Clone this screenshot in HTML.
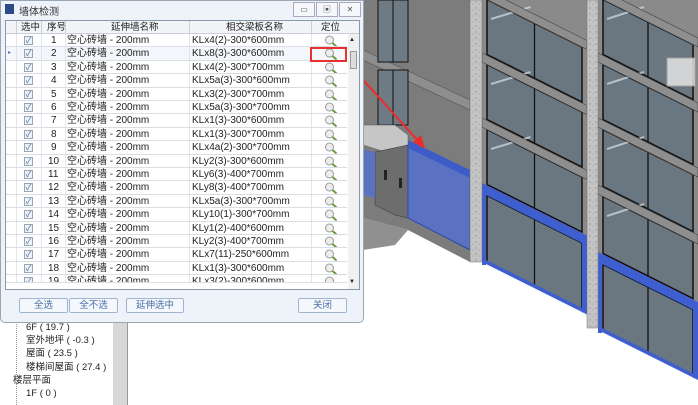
<!DOCTYPE html>
<html><head><meta charset="utf-8"><style>
*{margin:0;padding:0;box-sizing:border-box}
body{width:698px;height:405px;overflow:hidden;background:#fff;position:relative;font-family:"Liberation Sans","Noto Sans CJK SC",sans-serif;font-size:10px;color:#222}
.abs{position:absolute}
#dlg{left:0;top:0;width:364px;height:323px;background:#eef3f9;border:1px solid #9aa6b4;border-radius:0 0 5px 5px}
.row{position:absolute;left:5px;width:341px;height:13.4px;border-bottom:1px solid #d9dee6;background:#fff}
.row.alt{background:#f3f6fa}
.row span{position:absolute;top:0;line-height:13px;white-space:nowrap}
.cb{position:absolute;left:18px;top:2px;width:9px;height:9px;border:1px solid #9aa5b2;background:#eef1f5;font-size:8px;line-height:7px;text-align:center;color:#3b6fb5}
.mg{position:absolute;left:318px;top:1px}
.btn{position:absolute;top:297px;height:15px;border:1px solid #9fb5d2;background:#f4f8fc;border-radius:2px;text-align:center;line-height:13px;color:#4a6fa6;font-size:9.5px}
.tree{position:absolute;font-size:9.5px;line-height:12px;white-space:nowrap}
.wb{position:absolute;top:1px;width:22px;height:15px;border:1px solid #aab;background:#f5f7fa;font-size:8px;color:#555;text-align:center;line-height:13px}
</style></head><body>

<svg id="scene" class="abs" style="left:0;top:0" width="698" height="405"></svg>

<!-- tree panel -->
<div class="abs" style="left:0;top:320px;width:128px;height:85px;background:#fff;border-right:1px solid #999"></div>
<div class="abs" style="left:113px;top:320px;width:14px;height:85px;background:#d8d8d8"></div>
<div class="tree" style="left:26px;top:322px">6F ( 19.7 )</div>
<div class="tree" style="left:26px;top:335px">室外地坪 ( -0.3 )</div>
<div class="tree" style="left:26px;top:348px">屋面 ( 23.5 )</div>
<div class="tree" style="left:26px;top:362px">楼梯间屋面 ( 27.4 )</div>
<div class="tree" style="left:13px;top:375px">楼层平面</div>
<div class="tree" style="left:26px;top:388px">1F ( 0 )</div>
<div class="abs" style="left:16px;top:320px;width:0;height:85px;border-left:1px dotted #999"></div>

<!-- dialog -->
<div id="dlg" class="abs">
 <div class="abs" style="left:4px;top:3px;width:9px;height:10px;background:#2a4a8a"></div>
 <div class="abs" style="left:18px;top:2px;font-size:10px;color:#333">墙体检测</div>
 <div class="wb" style="left:292px">▭</div><div class="wb" style="left:315px">▣</div><div class="wb" style="left:338px">✕</div>
 <div class="abs" style="left:4px;top:19px;width:355px;height:270px;border:1px solid #8a98aa;background:#fff;overflow:hidden">
  <div class="abs" style="left:0;top:0;width:353px;height:13px;background:#f2f4f7;border-bottom:1px solid #c8ced6;font-size:9.5px;line-height:13px">
   <span class="abs" style="left:15px;">选中</span><span class="abs" style="left:41px">序号</span><span class="abs" style="left:105px">延伸墙名称</span><span class="abs" style="left:220px">相交梁板名称</span><span class="abs" style="left:315px">定位</span>
   <div class="abs" style="left:10px;top:0;height:13px;border-left:1px solid #ccd"></div><div class="abs" style="left:35px;top:0;height:13px;border-left:1px solid #ccd"></div><div class="abs" style="left:59px;top:0;height:13px;border-left:1px solid #ccd"></div><div class="abs" style="left:183px;top:0;height:13px;border-left:1px solid #ccd"></div><div class="abs" style="left:305px;top:0;height:13px;border-left:1px solid #ccd"></div>
  </div>
  <div class="abs" style="left:342px;top:13px;width:11px;height:257px;background:#f0f0f0"><div class="abs" style="left:1px;top:3px;font-size:6px">▲</div><div class="abs" style="left:2px;top:17px;width:7px;height:18px;background:#ddd;border:1px solid #999"></div><div class="abs" style="left:1px;top:245px;font-size:6px">▼</div></div>
 </div>
 <div id="rows"></div>
 <div class="btn" style="left:18px;width:49px">全选</div>
 <div class="btn" style="left:68px;width:49px">全不选</div>
 <div class="btn" style="left:125px;width:58px">延伸选中</div>
 <div class="btn" style="left:297px;width:49px">关闭</div>
</div>
<div class="abs" style="left:310px;top:47px;width:37px;height:15px;border:2px solid #e8302f"></div>

<script>
var s='<defs><pattern id="cw" width="6" height="6" patternUnits="userSpaceOnUse"><rect width="6" height="6" fill="#c4c4c4"/><circle cx="2" cy="2" r=".5" fill="#555"/><circle cx="5" cy="4" r=".4" fill="#666"/></pattern></defs>';
// left wall
s+='<polygon points="363,0 470,0 470,262 408,230 363,218" fill="#7c7c7c"/>';
s+='<polygon points="363,50 470,100 470,110 363,60" fill="#8e8e8e" stroke="#444" stroke-width=".5"/>';
s+='<rect x="378" y="0" width="30" height="62" fill="#6e7a84" stroke="#111"/><line x1="393" y1="0" x2="393" y2="62" stroke="#111"/>';
s+='<rect x="378" y="70" width="30" height="55" fill="#6e7a84" stroke="#111"/><line x1="393" y1="70" x2="393" y2="125" stroke="#111"/>';
s+='<polygon points="363,125 395,125 408,135 408,145 385,152 363,145" fill="#c6c6c6" stroke="#555" stroke-width=".5"/>';
s+='<polygon points="375,152 408,145 408,218 395,215 375,205" fill="#6d6d6d" stroke="#333" stroke-width=".5"/>';
s+='<rect x="384" y="170" width="3" height="10" fill="#222"/><rect x="399" y="178" width="3" height="10" fill="#222"/>';
s+='<polygon points="363,150 375,152 375,198 363,195" fill="#5a72c0"/>';
s+='<polygon points="363,218 408,230 395,245 363,250" fill="#909090"/>';
s+='<polygon points="408,145 470,175 470,250 408,218" fill="#5b72c2" stroke="#2e48a8"/>';
s+='<polygon points="408,140 470,170 470,178 408,148" fill="#3e5cc8"/>';
function bay(x0,x1,beams,blue,bottom){
 var w=x1-x0,dr=w*0.5,h='';
 h+='<polygon points="'+x0+',0 '+x1+',0 '+x1+','+(bottom+dr)+' '+x0+','+bottom+'" fill="#8a8a8a"/>';
 var levels=beams.concat([blue]);
 for(var i=0;i<levels.length;i++){
  var top=levels[i]+9, bot=(i+1<levels.length?levels[i+1]:bottom)-1;
  if(i==levels.length-1){top=blue+10;bot=bottom-1;}
  var a=x0+5,b=x1-5,m=(a+b)/2;
  h+='<polygon points="'+a+','+(top+2.5)+' '+b+','+(top+dr-2.5)+' '+b+','+(bot+dr-2.5)+' '+a+','+(bot+2.5)+'" fill="#6b7780" stroke="#111" stroke-width="1.5"/>';
  h+='<line x1="'+m+'" y1="'+(top+dr/2)+'" x2="'+m+'" y2="'+(bot+dr/2)+'" stroke="#111" stroke-width="1.3"/>';
  if(i<levels.length-1)h+='<line x1="'+(a+4)+'" y1="'+(top+22)+'" x2="'+(m-4)+'" y2="'+(top+10)+'" stroke="#c9d3dc" stroke-width="2" opacity=".8"/>';
 }
 for(var j=0;j<beams.length;j++)h+='<polygon points="'+x0+','+beams[j]+' '+x1+','+(beams[j]+dr)+' '+x1+','+(beams[j]+dr+9)+' '+x0+','+(beams[j]+9)+'" fill="#8e8e8e" stroke="#444" stroke-width=".6"/>';
 h+='<polygon points="'+x0+','+blue+' '+x1+','+(blue+dr)+' '+x1+','+(blue+dr+10)+' '+x0+','+(blue+10)+'" fill="#3f5ed0"/>';
 h+='<polygon points="'+x0+','+(bottom-2)+' '+x1+','+(bottom+dr-2)+' '+x1+','+(bottom+dr+2)+' '+x0+','+(bottom+2)+'" fill="#3f5ed0"/>';
 h+='<rect x="'+(x1-5)+'" y="'+(blue+dr)+'" width="5" height="'+(bottom-blue)+'" fill="#3f5ed0"/>';
 h+='<rect x="'+x0+'" y="'+(blue+5)+'" width="4" height="'+(bottom-blue)+'" fill="#3f5ed0"/>';
 return h;
}
s+=bay(482,587,[-12,53,118],183,260);
s+=bay(598,698,[-12,53,118,185],252,328);
s+='<rect x="470" y="0" width="12" height="262" fill="url(#cw)" stroke="#777" stroke-width=".5"/>';
s+='<rect x="587" y="0" width="11" height="328" fill="url(#cw)" stroke="#777" stroke-width=".5"/>';
s+='<rect x="667" y="58" width="28" height="28" fill="#e4e4e4" opacity=".85" stroke="#aaa"/>';
s+='<line x1="347" y1="62" x2="420" y2="143" stroke="#ee2b2b" stroke-width="2"/><polygon points="425,149 413,142 421,135" fill="#ee2b2b"/>';
document.getElementById("scene").innerHTML=s;

var d=["KLx4(2)-300*600mm","KLx8(3)-300*600mm","KLx4(2)-300*700mm","KLx5a(3)-300*600mm","KLx3(2)-300*700mm","KLx5a(3)-300*700mm","KLx1(3)-300*600mm","KLx1(3)-300*700mm","KLx4a(2)-300*700mm","KLy2(3)-300*600mm","KLy6(3)-400*700mm","KLy8(3)-400*700mm","KLx5a(3)-300*700mm","KLy10(1)-300*700mm","KLy1(2)-400*600mm","KLy2(3)-400*700mm","KLx7(11)-250*600mm","KLx1(3)-300*600mm","KLx3(2)-300*600mm"];
var h="";
d.forEach(function(r,i){var t=33+i*13.4;
h+='<div class="row'+(i==1?' alt':'')+'" style="top:'+t+'px;height:'+(i==18?8:13.4)+'px;overflow:hidden">'+
'<div class="cb">✓</div>'+(i==1?'<span style="left:2px;font-size:6px;color:#4a7ac0">▸</span>':'')+
'<span style="left:'+(i<9?45:42)+'px">'+(i+1)+'</span><span style="left:61px">空心砖墙 - 200mm</span><span style="left:186px">'+r+'</span>'+
'<svg class="mg" width="14" height="12"><circle cx="5.5" cy="5" r="4" fill="#eee" stroke="#999"/><line x1="8.5" y1="8" x2="12.5" y2="11.5" stroke="#6a9a3a" stroke-width="2"/></svg>'+
'<div style="position:absolute;left:10px;top:0;height:14px;border-left:1px solid #e2e6ec"></div><div style="position:absolute;left:35px;top:0;height:14px;border-left:1px solid #e2e6ec"></div><div style="position:absolute;left:59px;top:0;height:14px;border-left:1px solid #e2e6ec"></div><div style="position:absolute;left:183px;top:0;height:14px;border-left:1px solid #e2e6ec"></div><div style="position:absolute;left:305px;top:0;height:14px;border-left:1px solid #e2e6ec"></div></div>';});
document.getElementById("rows").innerHTML=h;
</script>
</body></html>
